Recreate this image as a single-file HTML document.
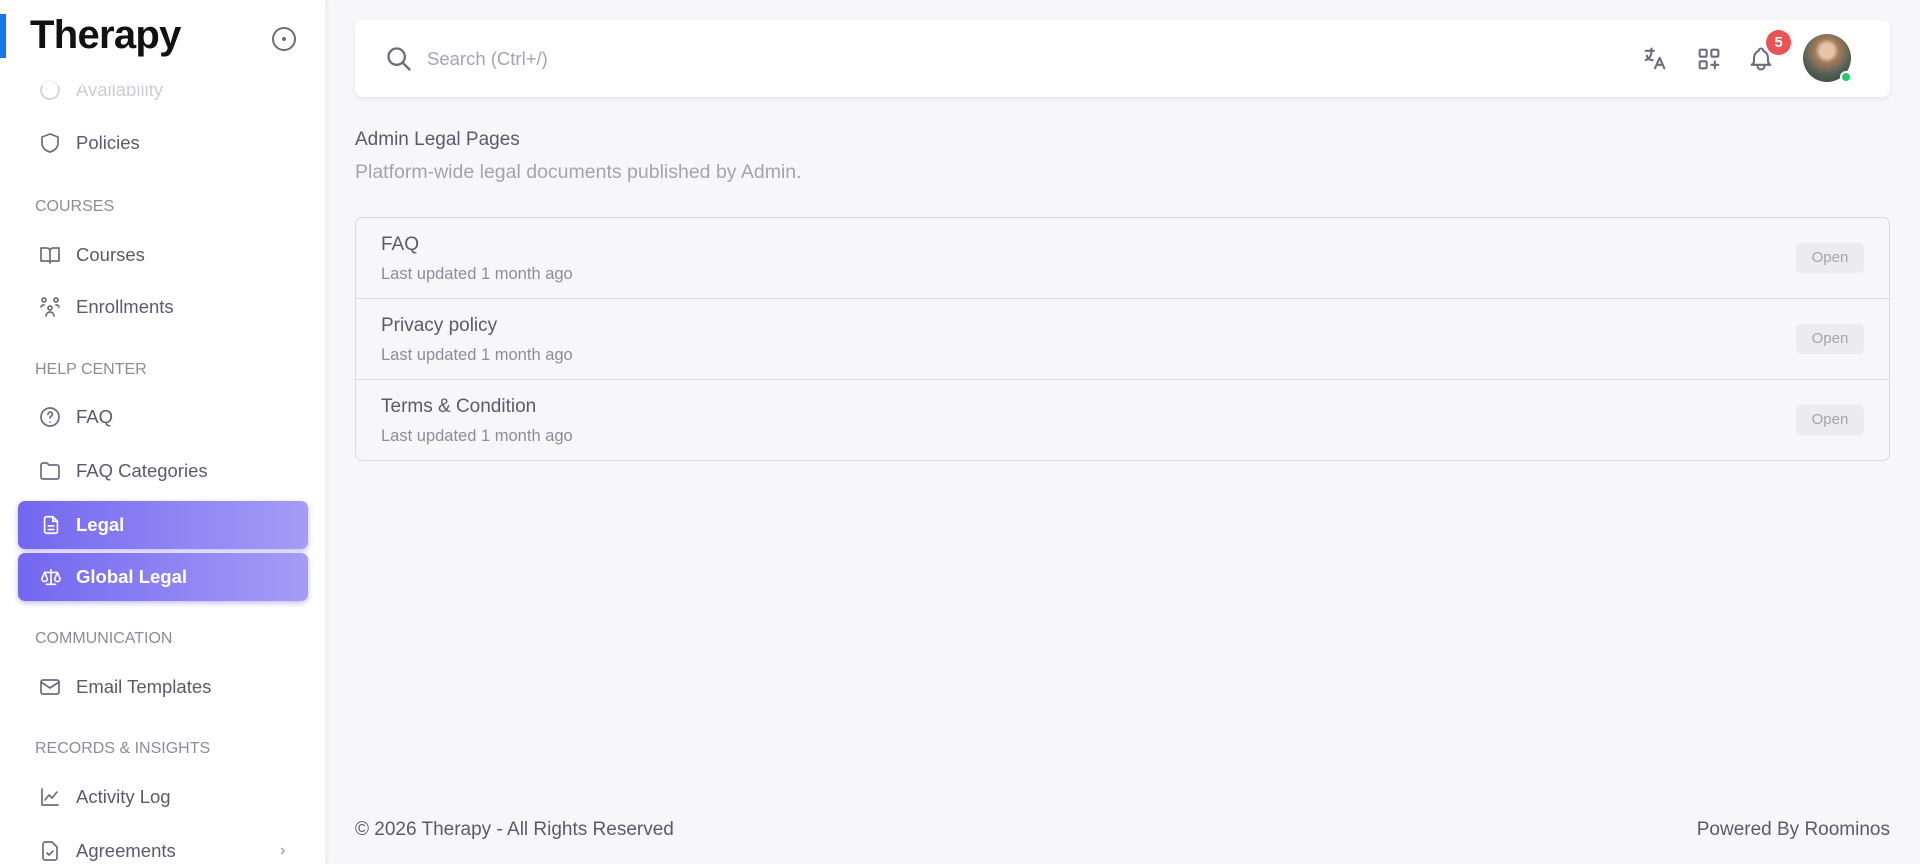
<!DOCTYPE html>
<html><head><meta charset="utf-8"><style>
*{box-sizing:border-box;margin:0;padding:0}
body{width:1920px;height:864px;overflow:hidden;background:#f7f7f9;font-family:"Liberation Sans",sans-serif;color:#5d596c;position:relative}
.sb{position:absolute;left:0;top:0;width:325px;height:864px;background:#fff;box-shadow:0 0 8px rgba(0,0,0,.08);overflow:hidden}
.cover{position:absolute;left:0;top:0;width:325px;height:86px;background:linear-gradient(#fff 85%,rgba(255,255,255,.6))}
.bar{position:absolute;left:0;top:14px;width:6px;height:44px;background:#1a73e8}
.logo{position:absolute;left:30px;top:13px;font-size:40px;font-weight:bold;color:#111;letter-spacing:-.7px}
.tg{position:absolute;left:272px;top:27px;width:24px;height:24px;border:2px solid #6f6b7d;border-radius:50%}
.tg:after{content:"";position:absolute;left:8px;top:8px;width:4px;height:4px;border-radius:50%;background:#6f6b7d}
.it{position:absolute;left:38px;font-size:18.5px;color:#5d596c;display:flex;align-items:center;gap:14px}
.it svg{width:24px;height:24px;fill:none;stroke:#6f6b7d;stroke-width:1.7;stroke-linecap:round;stroke-linejoin:round}
.sec{position:absolute;left:35px;font-size:16px;color:#8f8b9a}
.act{position:absolute;left:18px;width:290px;height:48px;border-radius:7px;background:linear-gradient(90deg,#7367f0,#a49df5);box-shadow:0 2px 6px rgba(115,103,240,.45);color:#fff;font-weight:bold;font-size:18.5px;display:flex;align-items:center;padding-left:22px;gap:14px}
.act svg{width:22px;height:22px;fill:none;stroke:#fff;stroke-width:1.8;stroke-linecap:round;stroke-linejoin:round}
.hdr{position:absolute;left:355px;top:20px;width:1535px;height:77px;background:#fff;border-radius:8px;box-shadow:0 2px 6px rgba(0,0,0,.07)}
.hdr .s{position:absolute;left:72px;top:28px;font-size:18.5px;color:#a5a3ae}
.hi{position:absolute;top:25px;width:28px;height:28px;fill:none;stroke:#6f6b7d;stroke-width:1.8;stroke-linecap:round;stroke-linejoin:round}
.badge{position:absolute;left:1411px;top:10px;width:25px;height:25px;border-radius:50%;background:#ea5455;color:#fff;font-size:15px;text-align:center;line-height:25px;font-weight:bold}
.av{position:absolute;left:1448px;top:14px;width:48px;height:48px;border-radius:50%;background:radial-gradient(circle at 50% 35%,#e7c3a8 0 18%,#a57c5c 30%,#556055 60%,#2f3a33)}
.dot{position:absolute;left:1485px;top:51px;width:12px;height:12px;border-radius:50%;background:#28c76f;border:2px solid #fff}
.t1{position:absolute;left:355px;top:129px;font-size:19px;color:#5d596c}
.t2{position:absolute;left:355px;top:161px;font-size:19.5px;color:#a5a3ae}
.list{position:absolute;left:355px;top:217px;width:1535px;height:244px;border:1px solid #dbdade;border-radius:7px;background:#f7f7f9}
.row{height:81px;border-bottom:1px solid #dbdade;position:relative}
.row:last-child{border-bottom:none}
.row b{position:absolute;left:25px;top:16px;font-size:19px;font-weight:normal;color:#5d596c}
.row span{position:absolute;left:25px;top:47px;font-size:16.5px;color:#8f8b9a}
.row i{position:absolute;right:25px;top:25px;width:68px;height:30px;background:#ececee;border-radius:5px;font-style:normal;font-size:15px;color:#a5a3ae;text-align:center;line-height:30px}
.ft{position:absolute;top:819px;font-size:19px;color:#5d596c}
</style></head><body>
<div class="sb">
<div class="it" style="top:78px;opacity:.3"><svg viewBox="0 0 24 24"><circle cx="12" cy="12" r="9"/></svg>Availability</div>
<div class="cover"></div>
<div class="bar"></div><div class="logo">Therapy</div><div class="tg"></div>
<div class="it" style="top:131px"><svg viewBox="0 0 24 24"><path d="M12 3l8 3v6c0 5-4 8-8 9-4-1-8-4-8-9V6z"/></svg>Policies</div>
<div class="sec" style="top:198px">COURSES</div>
<div class="it" style="top:243px"><svg viewBox="0 0 24 24"><path d="M3 5h6a3 3 0 013 3v12a2 2 0 00-2-2H3zM21 5h-6a3 3 0 00-3 3v12a2 2 0 012-2h7z"/></svg>Courses</div>
<div class="it" style="top:295px"><svg viewBox="0 0 24 24"><circle cx="6" cy="5" r="2"/><circle cx="18" cy="5" r="2"/><circle cx="12" cy="13" r="2"/><path d="M3 12a3 3 0 013-2M21 12a3 3 0 00-3-2M8 21a4 4 0 018 0"/></svg>Enrollments</div>
<div class="sec" style="top:361px">HELP CENTER</div>
<div class="it" style="top:405px"><svg viewBox="0 0 24 24"><circle cx="12" cy="12" r="9"/><path d="M10 9.5a2.2 2.2 0 114 1c-1 .8-2 1.2-2 2.5M12 17v.01"/></svg>FAQ</div>
<div class="it" style="top:459px"><svg viewBox="0 0 24 24"><path d="M3 6a2 2 0 012-2h4l2 2h8a2 2 0 012 2v10a2 2 0 01-2 2H5a2 2 0 01-2-2z"/></svg>FAQ Categories</div>
<div class="act" style="top:501px"><svg viewBox="0 0 24 24"><path d="M14 3H7a2 2 0 00-2 2v14a2 2 0 002 2h10a2 2 0 002-2V8zM14 3v5h5M9 13h6M9 17h6"/></svg>Legal</div>
<div class="act" style="top:553px"><svg viewBox="0 0 24 24"><path d="M12 4v16M7 20h10M5 7h14M5 7l-3 7a3 3 0 006 0zM19 7l-3 7a3 3 0 006 0z"/></svg>Global Legal</div>
<div class="sec" style="top:630px">COMMUNICATION</div>
<div class="it" style="top:675px"><svg viewBox="0 0 24 24"><rect x="3" y="5" width="18" height="14" rx="2"/><path d="M3 7l9 6 9-6"/></svg>Email Templates</div>
<div class="sec" style="top:740px">RECORDS &amp; INSIGHTS</div>
<div class="it" style="top:785px"><svg viewBox="0 0 24 24"><path d="M4 4v16h16M7 15l4-5 3 3 5-6"/></svg>Activity Log</div>
<div class="it" style="top:839px"><svg viewBox="0 0 24 24"><path d="M14 3H7a2 2 0 00-2 2v14a2 2 0 002 2h10a2 2 0 002-2V8zM9 14l2 2 4-4"/></svg>Agreements</div>
<div style="position:absolute;left:280px;top:842px;font-size:16px;color:#8f8b9a">›</div>
</div>
<div class="hdr">
<svg class="hi" style="left:30px;stroke-width:2" viewBox="0 0 24 24"><circle cx="10" cy="10" r="7"/><path d="M21 21l-6-6"/></svg>
<div class="s">Search (Ctrl+/)</div>
<svg class="hi" style="left:1286px" viewBox="0 0 24 24"><path d="M4 5h7M9 3v2c0 4-2 7-5 8M5 9c0 2 2 4 5 4M12 20l4-9 4 9M13.5 17h5"/></svg>
<svg class="hi" style="left:1340px" viewBox="0 0 24 24"><rect x="4" y="4" width="6" height="6" rx="1"/><rect x="14" y="4" width="6" height="6" rx="1"/><rect x="4" y="14" width="6" height="6" rx="1"/><path d="M14 17h6M17 14v6"/></svg>
<svg class="hi" style="left:1392px" viewBox="0 0 24 24"><path d="M10 5a2 2 0 014 0 7 7 0 014 6v3a4 4 0 002 3H4a4 4 0 002-3v-3a7 7 0 014-6M9 17v1a3 3 0 006 0v-1"/></svg>
<div class="badge">5</div>
<div class="av"></div><div class="dot"></div>
</div>
<div class="t1">Admin Legal Pages</div>
<div class="t2">Platform-wide legal documents published by Admin.</div>
<div class="list">
<div class="row"><b>FAQ</b><span>Last updated 1 month ago</span><i>Open</i></div>
<div class="row"><b>Privacy policy</b><span>Last updated 1 month ago</span><i>Open</i></div>
<div class="row"><b>Terms &amp; Condition</b><span>Last updated 1 month ago</span><i>Open</i></div>
</div>
<div class="ft" style="left:355px">© 2026 Therapy - All Rights Reserved</div>
<div class="ft" style="right:30px">Powered By Roominos</div>
</body></html>
